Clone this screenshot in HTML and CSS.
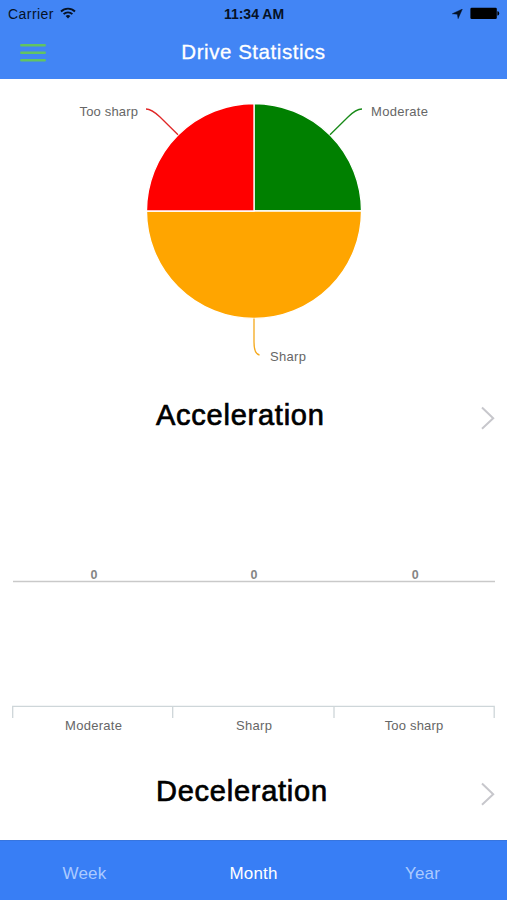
FILE: index.html
```html
<!DOCTYPE html>
<html lang="en">
<head>
<meta charset="utf-8">
<title>Drive Statistics</title>
<link rel="stylesheet" href="styles.css">
</head>
<body>
<div class="screen">
  <header class="header">
    <div class="status">
      <div class="status-left">
        <span class="carrier">Carrier</span>
        <svg class="wifi" width="16" height="12" viewBox="0 0 16 12" fill="none" stroke="#061225" stroke-width="1.9">
          <path d="M1 4.5a9.9 9.9 0 0 1 14 0M3.6 7.2a6.2 6.2 0 0 1 8.8 0"/>
          <path d="M8 11.5L5.6 9.1a3.4 3.4 0 0 1 4.8 0z" fill="#061225" stroke="none"/>
        </svg>
      </div>
      <span class="clock">11:34 AM</span>
      <div class="status-right">
        <svg width="11" height="10" viewBox="0 0 11 10"><path d="M10.4 0L6.1 9.7L5.3 5.2L0.2 4.8z" fill="#061225" stroke="#061225" stroke-width="0.4"/></svg>
        <svg width="31" height="13" viewBox="0 0 31 13"><rect x="1.4" y="0.7" width="26.4" height="11.4" rx="1.3"/><path d="M28.4 4.3h.6q1.200 .5 1.200 2.100t-1.200 2.100h-.6z"/></svg>
      </div>
    </div>
    <nav class="navbar">
      <svg class="menu" width="26" height="20" viewBox="0 0 26 20" stroke="#62c462" stroke-width="2.5" stroke-linecap="round"><path d="M1.300 2.300h23.400M1.300 9.700h23.400M1.300 17.200h23.400"/></svg>
      <h1 class="title">Drive Statistics</h1>
    </nav>
  </header>
  <main class="content">
    <svg class="pie" width="507" height="301" viewBox="0 79 507 301">
      <g stroke="#fff" stroke-width="1.3">
        <path d="M254 211V103.500A107.500 107.500 0 0 1 361.500 211z" fill="#008000"/>
        <path d="M254 211H361.500A107.500 107.500 0 0 1 146.500 211z" fill="#ffa500"/>
        <path d="M254 211H146.500A107.500 107.500 0 0 1 254 103.500z" fill="#f00"/>
      </g>
      <g fill="none" stroke-width="1.3">
        <path d="M330 134.700L348 117Q356 109 362 109" stroke="#188a18"/>
        <path d="M178 134.700L160 117Q151.500 109 146 109" stroke="#e02727"/>
        <path d="M254 318.500V342Q254 354 259.500 355" stroke="#f5a91c"/>
      </g>
      <g class="label">
        <text x="371" y="116" textLength="57">Moderate</text>
        <text x="79.500" y="116" textLength="58.500">Too sharp</text>
        <text x="270" y="361.200" textLength="36">Sharp</text>
      </g>
    </svg>
    <section class="row">
      <h2 class="heading">Acceleration</h2>
      <svg class="chevron" width="16" height="24" viewBox="0 0 16 24"><path d="M2 1.500L13.200 12.200L2 22.800"/></svg>
    </section>
    <svg class="bars" width="507" height="306" viewBox="0 450 507 306">
      <path d="M13 581.500H495" stroke="#c9c9c9" stroke-width="1.3"/>
      <path d="M12.700 718V706.300H494.200V718M172.700 706.300V718M334 706.300V718" fill="none" stroke="#ced6d9" stroke-width="1.3"/>
      <g class="value">
        <text x="94" y="578.500">0</text>
        <text x="254" y="578.500">0</text>
        <text x="415.300" y="578.500">0</text>
      </g>
      <g class="label">
        <text x="65" y="730.200" textLength="57">Moderate</text>
        <text x="236" y="730.200" textLength="36">Sharp</text>
        <text x="384.700" y="730.200" textLength="58.500">Too sharp</text>
      </g>
    </svg>
    <section class="row">
      <h2 class="heading">Deceleration</h2>
      <svg class="chevron" width="16" height="24" viewBox="0 0 16 24"><path d="M2 1.500L13.200 12.200L2 22.800"/></svg>
    </section>
  </main>
  <footer class="tabs">
    <span class="tab">Week</span>
    <span class="tab tab-active">Month</span>
    <span class="tab">Year</span>
  </footer>
</div>
</body>
</html>
```
FILE: styles.css
```css
* { box-sizing: border-box; }
body { margin: 0; background: #fff; font-family: "Liberation Sans", Arial, sans-serif; }
svg { display: block; flex: none; }
.screen { width: 507px; height: 900px; display: flex; flex-direction: column; overflow: hidden; }
.header { height: 79px; background: #4285f5; }
.status { height: 27px; display: grid; grid-template-columns: 1fr auto 1fr; padding: 0 7px 0 8px; align-items: center; color: #061225; }
.status-left { display: flex; align-items: center; gap: 6px; }
.carrier { font-size: 14px; letter-spacing: 0.45px; }
.wifi { margin-top: -2px; }
.clock { font-size: 14px; font-weight: bold; letter-spacing: 0; }
.status-right { display: flex; justify-content: flex-end; align-items: center; gap: 6px; fill: #000; }
.navbar { height: 51px; display: grid; grid-template-columns: 1fr auto 1fr; align-items: center; padding: 0 20px; }
.title { margin: 0; grid-column: 2; color: #fff; font-size: 20.5px; font-weight: normal; letter-spacing: 0.55px; line-height: 24px; padding-bottom: 2px; -webkit-text-stroke: 0.3px #fff; }
.content { flex: 1; min-height: 0; }
.label { font-size: 13px; fill: #666; }
.value { font-size: 12.5px; font-weight: bold; fill: #858585; text-anchor: middle; }
.row { height: 70px; display: flex; justify-content: space-between; align-items: center; padding: 0 11px 0 156px; }
.heading { margin: 0; font-size: 29px; font-weight: normal; letter-spacing: 0.75px; line-height: 36px; color: #000; -webkit-text-stroke: 0.7px #000; }
.chevron { margin-top: 6px; fill: none; stroke: #c7c7cc; stroke-width: 2; }
.tabs { height: 60px; display: grid; grid-template-columns: repeat(3, 1fr); align-items: center; background: #387ef5; border-top: 1px solid #3775df; padding-top: 7px; text-align: center; }
.tab { font-size: 17px; color: #abcaff; letter-spacing: 0.2px; }
.tab-active { color: #fff; }
```
